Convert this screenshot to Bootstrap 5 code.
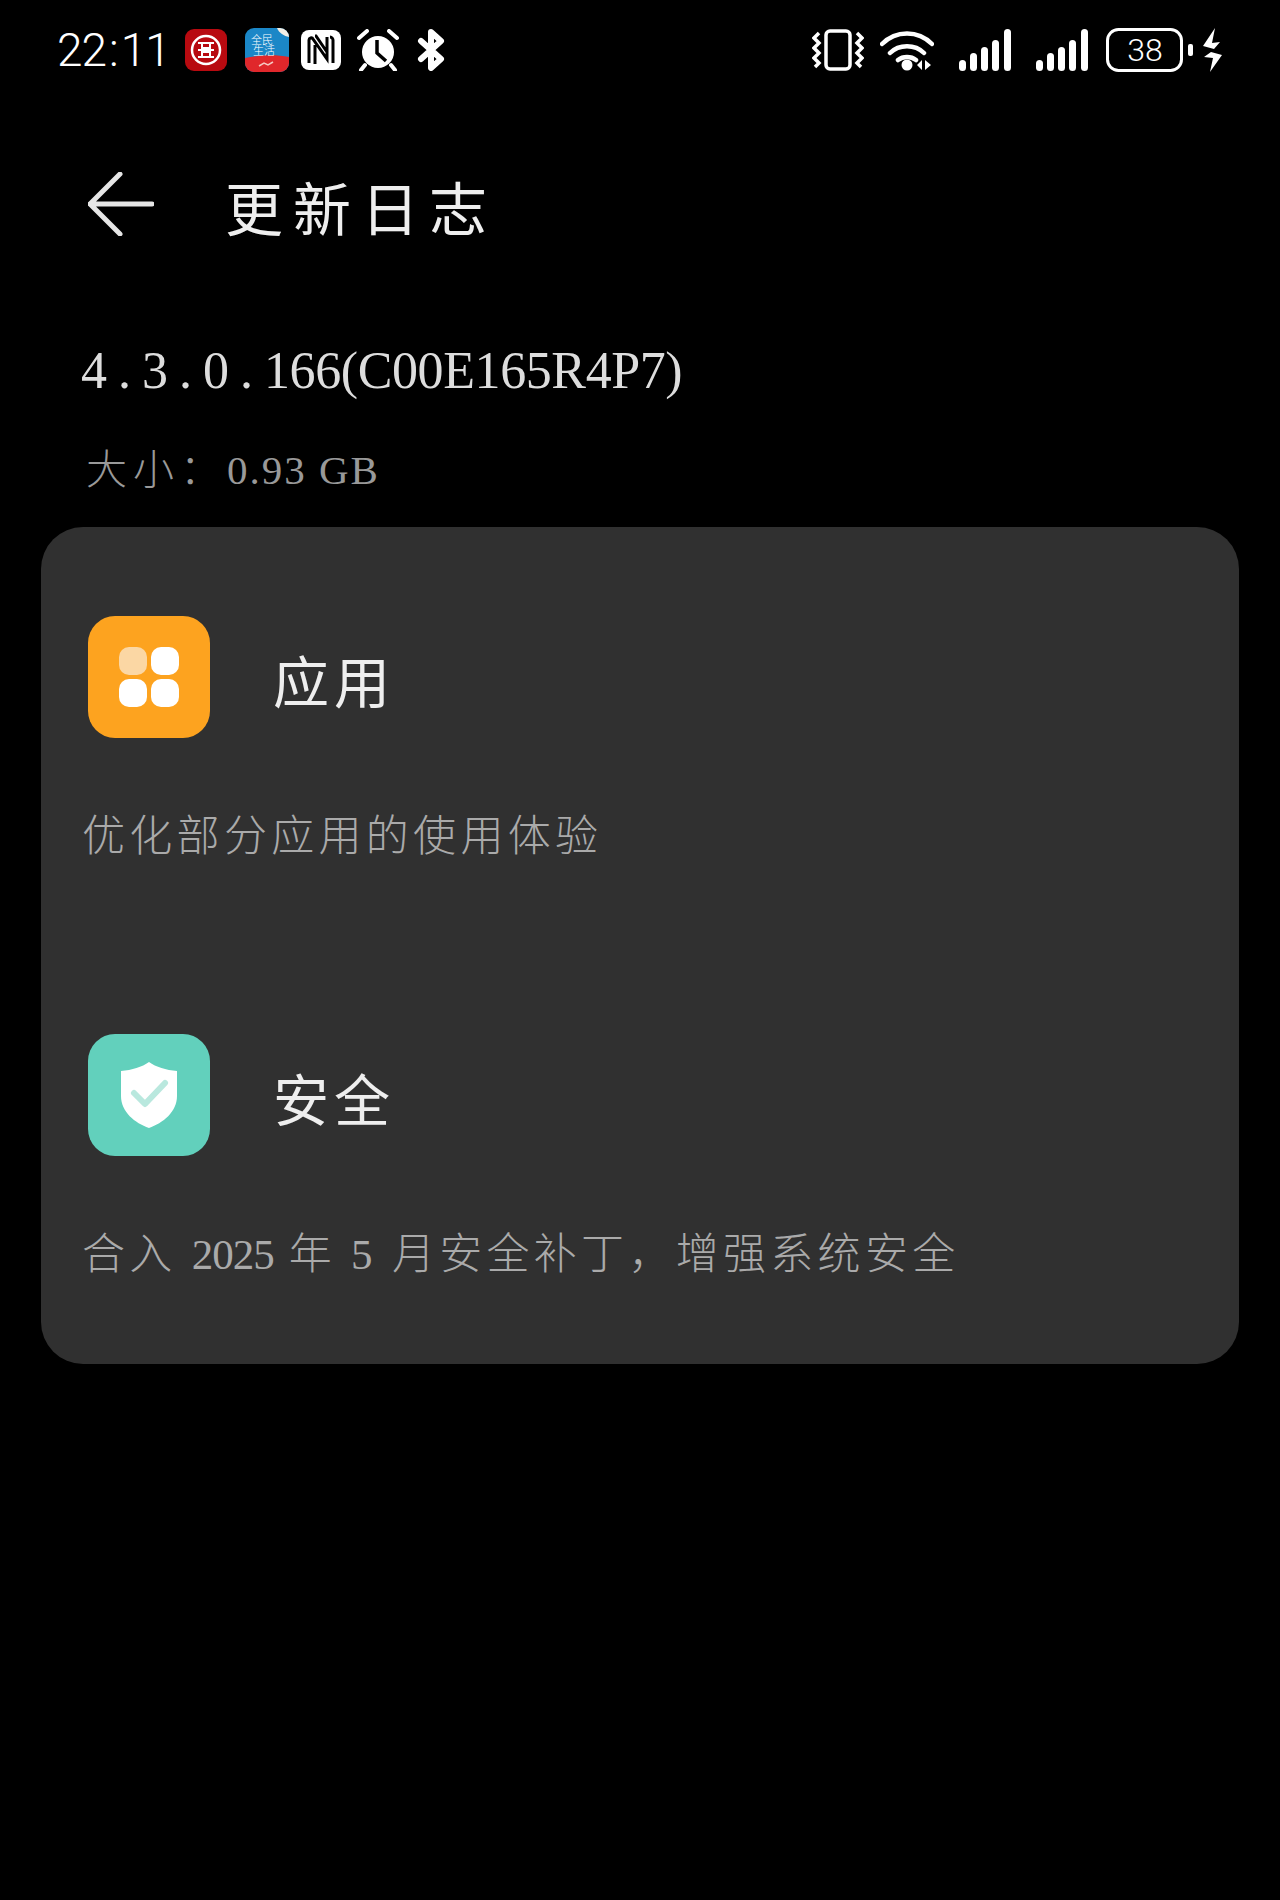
<!DOCTYPE html>
<html lang="zh-CN">
<head>
    <meta charset="UTF-8">
    <meta name="viewport" content="width=device-width, initial-scale=1.0">
    <title>更新日志</title>
    <link href="https://cdn.jsdelivr.net/npm/bootstrap@5.3.3/dist/css/bootstrap.min.css" rel="stylesheet">
    <style>
        body {
            background: #000;
            color: #eee;
            font-family: "Liberation Serif", "Noto Sans CJK SC", serif;
            font-weight: 300;
        }
        .screen { height: 1900px; }

        /* status bar */
        .status-bar { height: 100px; padding: 28px 58px 0 57px; }
        .clock {
            font-family: Roboto, "Liberation Sans", sans-serif;
            font-weight: 300;
            font-size: 46px;
            line-height: 44px;
            letter-spacing: -1px;
            width: 128px;
            color: #fff;
        }
        .clock span { margin: 0 3px; }
        .status-bar svg { display: block; flex: none; }
        .gap-s { margin-left: 10px; }
        .gap-m { margin-left: 12px; }
        .gap-l { margin-left: 16px; }
        .gap-xl { margin-left: 18px; }
        .gap-xxl { margin-left: 25px; }

        /* title */
        .title-bar { height: 125px; margin-top: 41px; padding-left: 88px; }
        .title-bar h1 {
            font-size: 58px;
            font-weight: 400;
            letter-spacing: 10px;
            line-height: 60px;
            margin: 16px 0 0 71px;
            color: #eee;
        }

        /* version */
        .version-block { padding: 73px 0 0 81px; height: 261px; flex: none; }
        .version-num {
            font-size: 52px;
            line-height: 64px;
            letter-spacing: -0.4px;
            color: #ddd;
            margin: 0;
            font-weight: 400;
        }
        .version-dots { letter-spacing: 11px; }
        .version-size {
            font-size: 41px;
            line-height: 50px;
            letter-spacing: 6px;
            color: #999;
            margin: 42px 0 0 5px;
        }
        .version-size span { letter-spacing: 2px; }

        /* log card */
        .log-card {
            margin: 0 41px;
            background: #303030;
            border: 0;
            border-radius: 42px;
            height: 837px;
            padding: 89px 47px 0 47px;
        }
        .log-group { height: 418px; flex: none; }
        .log-icon {
            width: 122px;
            height: 122px;
            border-radius: 27px;
            flex: none;
        }
        .log-icon.orange { background: #fda31f; }
        .log-icon.teal { background: #62d0bc; }
        .log-head {
            font-size: 56px;
            line-height: 60px;
            letter-spacing: 5px;
            color: #eee;
            margin: 14px 0 0 63px;
            font-weight: 400;
        }
        .log-text {
            font-size: 43px;
            line-height: 54px;
            letter-spacing: 4.3px;
            color: #aaa;
            margin: 72px 0 0 -6px;
            white-space: nowrap;
        }
        .log-num { letter-spacing: -1px; }
    </style>
</head>
<body>
    <main class="screen d-flex flex-column">
        <div class="status-bar d-flex justify-content-between align-items-start">
            <div class="d-flex align-items-center">
                <div class="clock">22<span>:</span>11</div>
                <!-- bank -->
                <svg width="42" height="42" viewBox="0 0 42 42">
                    <rect width="42" height="42" rx="9" fill="#b80a10"/>
                    <circle cx="21" cy="21" r="14" fill="none" stroke="#fff" stroke-width="2.5"/>
                    <path d="M13 14h16M13 28h16M17 14v5h8v-5M17 28v-5h8v5M13 21h16" fill="none" stroke="#fff" stroke-width="2"/>
                </svg>
                <!-- minsheng app -->
                <svg class="gap-xl" width="44" height="44" viewBox="0 0 44 44">
                    <defs><clipPath id="appClip"><rect width="44" height="44" rx="9"/></clipPath></defs>
                    <g clip-path="url(#appClip)">
                        <rect width="44" height="44" fill="#1b87c7"/>
                        <path d="M0 30C15 27 30 26 44 29V44H0Z" fill="#e0272b"/>
                        <path d="M32 0h12v9C39 8 34 5 32 0Z" fill="#f3efe6"/>
                        <path d="M14 38l5-3 4 2 5-3" fill="none" stroke="#f5c6c0" stroke-width="1.5"/>
                    </g>
                    <text x="6" y="16" font-size="11" fill="#fff">全民</text>
                    <text x="8" y="27" font-size="11" fill="#fff">生活</text>
                </svg>
                <!-- nfc -->
                <svg class="gap-m" width="40" height="40" viewBox="0 0 40 40">
                    <rect width="40" height="40" rx="8" fill="#fff"/>
                    <path d="M8 33V10c0-2 3-3 4-1l14 20V7M14 34V15M32 33V10c0-1-1-3-3-3M14 6h1l11 16" fill="none" stroke="#000" stroke-width="3"/>
                </svg>
                <!-- alarm -->
                <svg class="gap-l" width="42" height="42" viewBox="0 0 42 42">
                    <circle cx="21" cy="23" r="16" fill="#fff"/>
                    <path d="M2 9l8-7M40 9l-8-7M8 36l-4 5M34 36l4 5" stroke="#fff" stroke-width="4" stroke-linecap="round"/>
                    <path d="M20 11v13l9 8" fill="none" stroke="#000" stroke-width="3.5"/>
                </svg>
                <!-- bluetooth -->
                <svg class="gap-xl" width="28" height="42" viewBox="0 0 28 42">
                    <path d="M4 12l20 18-10 9V3l10 9L4 30" fill="none" stroke="#fff" stroke-width="6" stroke-linejoin="round" stroke-linecap="round"/>
                </svg>
            </div>
            <div class="d-flex align-items-center">
                <!-- vibrate -->
                <svg width="52" height="42" viewBox="0 0 52 42">
                    <rect x="14" y="2" width="24" height="38" rx="4" fill="none" stroke="#fff" stroke-width="3.5"/>
                    <path d="M7 4l-5 5 5 5-5 5 5 5-5 5 5 5-4 4M45 4l5 5-5 5 5 5-5 5 5 5-5 5 4 4" fill="none" stroke="#fff" stroke-width="3.5"/>
                </svg>
                <!-- wifi -->
                <svg class="gap-l" width="54" height="42" viewBox="0 0 54 42">
                    <path d="M2 15C16 1 38 1 52 15M10 24c9-9 25-9 34 0M18 31c5-4 13-4 18 0" fill="none" stroke="#fff" stroke-width="4.5" stroke-linecap="round"/>
                    <circle cx="27" cy="36" r="5.5" fill="#fff"/>
                    <path d="M42 31v10l-5-5ZM45 31v10l6-5Z" fill="#fff"/>
                </svg>
                <!-- signal -->
                <svg class="gap-xxl" width="52" height="42" viewBox="0 0 52 42">
                    <g fill="#fff">
                        <rect x="0" y="31" width="7" height="11" rx="3.5"/>
                        <rect x="11" y="24" width="7" height="18" rx="3.5"/>
                        <rect x="22" y="18" width="7" height="24" rx="3.5"/>
                        <rect x="33" y="11" width="7" height="31" rx="3.5"/>
                        <rect x="45" y="0" width="7" height="42" rx="3.5"/>
                    </g>
                </svg>
                <svg class="gap-xxl" width="52" height="42" viewBox="0 0 52 42">
                    <g fill="#fff">
                        <rect x="0" y="31" width="7" height="11" rx="3.5"/>
                        <rect x="11" y="24" width="7" height="18" rx="3.5"/>
                        <rect x="22" y="18" width="7" height="24" rx="3.5"/>
                        <rect x="33" y="11" width="7" height="31" rx="3.5"/>
                        <rect x="45" y="0" width="7" height="42" rx="3.5"/>
                    </g>
                </svg>
                <!-- battery -->
                <svg class="gap-xl" width="87" height="44" viewBox="0 0 87 44">
                    <rect x="1.5" y="1.5" width="74" height="41" rx="11" fill="none" stroke="#fff" stroke-width="3"/>
                    <rect x="82" y="16" width="5" height="12" rx="2" fill="#fff"/>
                    <text x="39" y="33" text-anchor="middle" font-family="Roboto, sans-serif" font-weight="300" font-size="32" fill="#fff">38</text>
                </svg>
                <!-- charging -->
                <svg class="gap-s" width="19" height="44" viewBox="0 0 19 44">
                    <path d="M12 0L0 18l11 3 6-7-8 1Z M8 24l-7 5 9 1-3 14 12-17Z" fill="#fff"/>
                </svg>
            </div>
        </div>

        <div class="title-bar d-flex align-items-center">
            <svg width="66" height="64" viewBox="0 0 66 64">
                <path d="M32 2L2 32l30 30M2 32h62" fill="none" stroke="#e6e6e6" stroke-width="5" stroke-linecap="round" stroke-linejoin="round"/>
            </svg>
            <h1>更新日志</h1>
        </div>

        <section class="version-block">
            <h2 class="version-num"><span class="version-dots">4.3.0.</span>166(C00E165R4P7)</h2>
            <p class="version-size">大小：<span>0.93 GB</span></p>
        </section>

        <div class="card log-card">
            <div class="log-group">
                <div class="d-flex align-items-center">
                    <div class="log-icon orange d-flex align-items-center justify-content-center">
                        <svg width="60" height="60" viewBox="0 0 60 60">
                            <rect x="0" y="0" width="28" height="28" rx="10" fill="#fbd7a4"/>
                            <rect x="32" y="0" width="28" height="28" rx="10" fill="#fff"/>
                            <rect x="0" y="32" width="28" height="28" rx="10" fill="#fff"/>
                            <rect x="32" y="32" width="28" height="28" rx="10" fill="#fff"/>
                        </svg>
                    </div>
                    <h3 class="log-head">应用</h3>
                </div>
                <p class="log-text">优化部分应用的使用体验</p>
            </div>
            <div class="log-group">
                <div class="d-flex align-items-center">
                    <div class="log-icon teal d-flex align-items-center justify-content-center">
                        <svg width="56" height="66" viewBox="0 0 56 66">
                            <path d="M28 0C35 5 45 8 56 9V34C56 50 42 61 28 66C14 61 0 50 0 34V9C11 8 21 5 28 0Z" fill="#fff"/>
                            <path d="M13 31l11 11L44 21" fill="none" stroke="#b9e8de" stroke-width="6" stroke-linecap="round" stroke-linejoin="round"/>
                        </svg>
                    </div>
                    <h3 class="log-head">安全</h3>
                </div>
                <p class="log-text">合入 <span class="log-num">2025</span> 年 5 月安全补丁，增强系统安全</p>
            </div>
        </div>
    </main>
    <script src="https://cdn.jsdelivr.net/npm/bootstrap@5.3.3/dist/js/bootstrap.bundle.min.js"></script>
</body>
</html>
